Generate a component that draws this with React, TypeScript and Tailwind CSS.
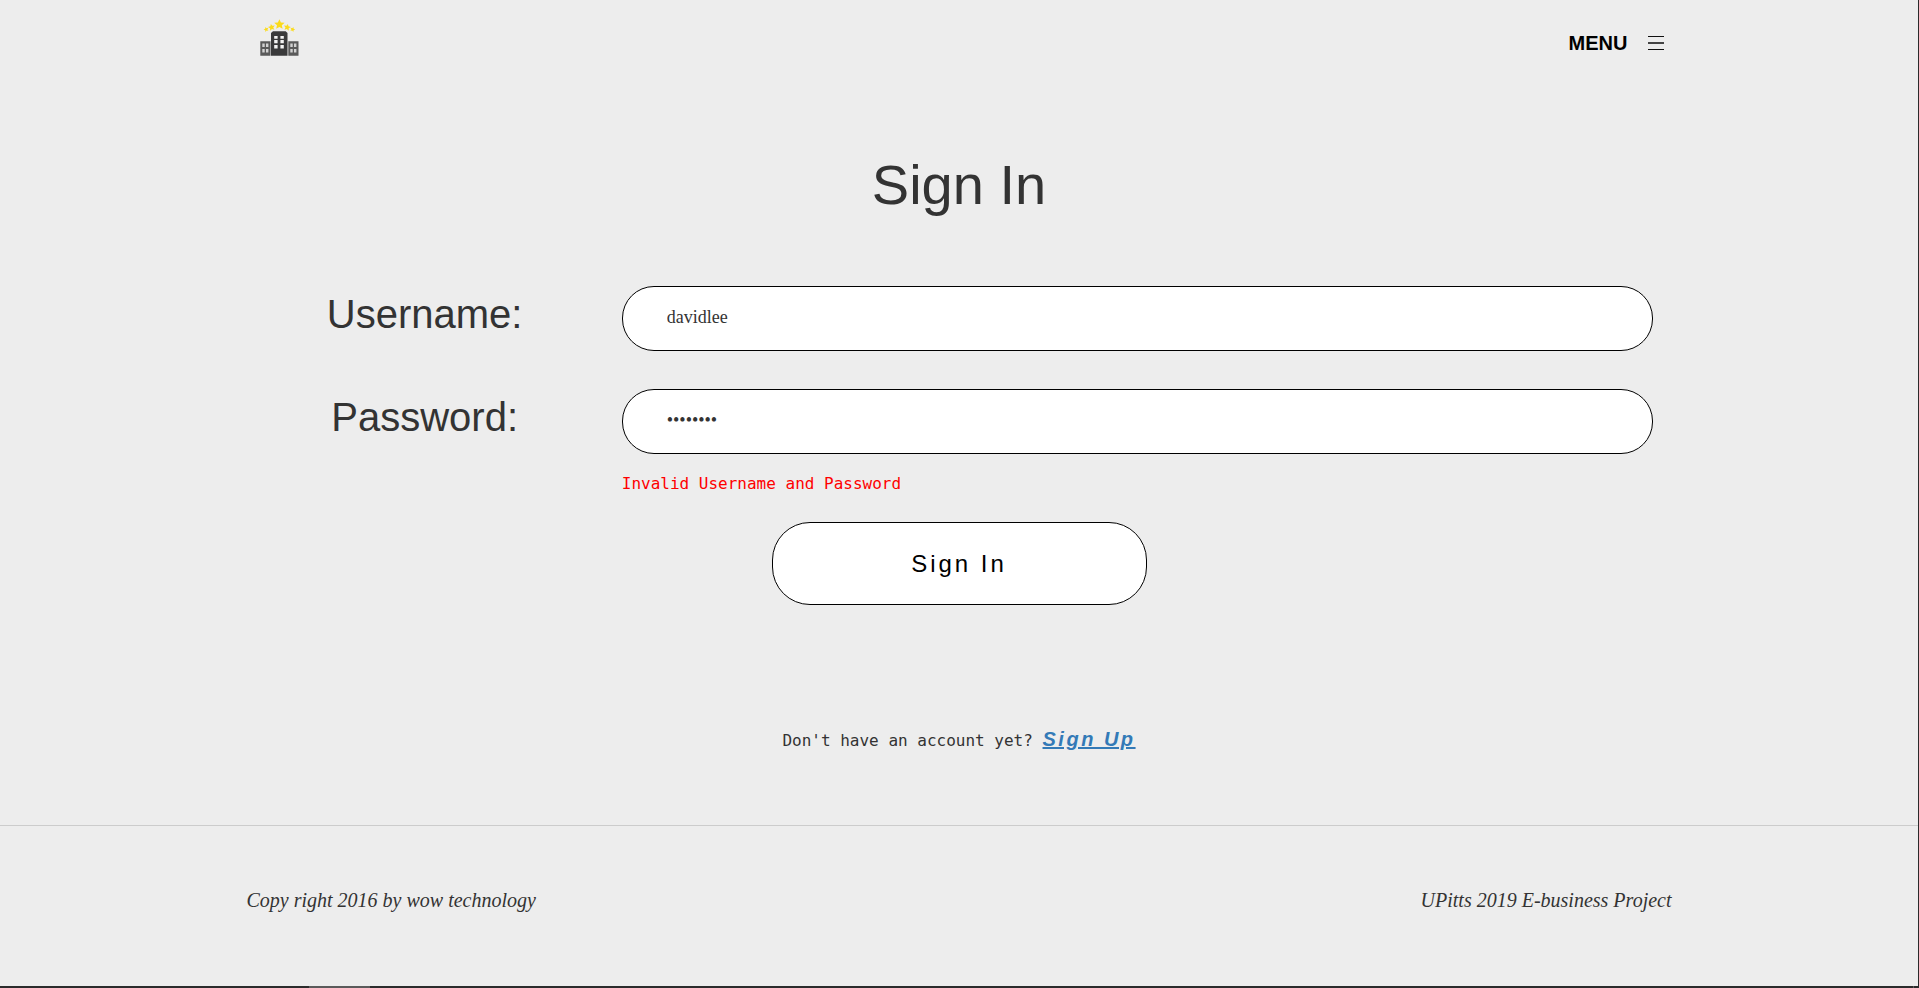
import React from "react";

const STAR =
  "M0 -1 L0.29 -0.36 L1 -0.31 L0.46 0.16 L0.62 0.85 L0 0.48 L-0.62 0.85 L-0.46 0.16 L-1 -0.31 L-0.29 -0.36 Z";

function Logo() {
  return (
    <svg width="40" height="40" viewBox="0 0 40 40" aria-hidden="true">
      <g fill="#fbdb1b">
        <path d={STAR} transform="translate(20.4 6.4) scale(5.2)" />
        <path d={STAR} transform="translate(12.6 9.3) rotate(-12) scale(3.5)" />
        <path d={STAR} transform="translate(28.2 9.3) rotate(12) scale(3.5)" />
        <path d={STAR} transform="translate(7.2 11.4) rotate(-20) scale(2.5)" />
        <path d={STAR} transform="translate(33.6 11.4) rotate(20) scale(2.5)" />
      </g>
      <path fill="#5a5a5a" d="M1.300 23.200h10.200v14.500H1.300zM29.300 23.200h10.200v14.500H29.300z" />
      <path
        fill="#d2d2d2"
        d="M3.300 25.500h2.400v3.600H3.300zM7 25.500h2.400v3.600H7zM3.300 31h2.400v3.600H3.300zM7 31h2.400v3.600H7zM31.300 25.500h2.400v3.600h-2.400zM35 25.500h2.400v3.600H35zM31.300 31h2.400v3.600h-2.400zM35 31h2.400v3.600H35z"
      />
      <path fill="#3a3a3b" d="M14 13.200h12.600L28.500 15v22.700H12V15z" />
      <path
        fill="#f4f4f4"
        d="M15.200 18h3.400v2.800h-3.400zM21.400 18h3.400v2.800h-3.400zM15.200 22h3.400v3.300h-3.400zM21.400 22h3.400v3.300h-3.400zM15.200 27h3.400v3.500h-3.400zM21.400 27h3.400v3.500h-3.400z"
      />
    </svg>
  );
}

function Field({ id, label, type, value }: { id: string; label: string; type: string; value: string }) {
  return (
    <div className="grid grid-cols-4">
      <label htmlFor={id} className="pt-1 text-center text-[40px] leading-12">
        {label}
      </label>
      <div className="col-span-3 px-[19px]">
        <input
          id={id}
          type={type}
          defaultValue={value}
          className="block h-[65px] w-full rounded-[32px] border border-black bg-white px-11 pb-0.5 font-['Liberation_Serif',serif] text-lg outline-none"
        />
      </div>
    </div>
  );
}

export default function App() {
  return (
    <div className="flex min-h-screen flex-col bg-[#2b2b2b] pr-px font-['Liberation_Sans',Arial,sans-serif] text-[#333]">
      <div className="flex grow flex-col bg-[#ededed]">
        <header className="mx-auto flex w-full max-w-[1425px] justify-between pt-[18px] pr-2 pl-3">
          <a href="#home" aria-label="Home">
            <Logo />
          </a>
          <button type="button" className="flex h-[50px] items-center gap-5 text-xl font-bold text-black">
            MENU
            <svg width="16" height="16" viewBox="0 0 16 16" aria-hidden="true">
              <path fill="#111" d="M0 1h16v1H0zM0 14h16v1H0z" />
              <path fill="#444" d="M0 7h16v2H0z" />
            </svg>
          </button>
        </header>

        <main className="mx-auto w-full max-w-[1425px]">
          <h1 className="pt-[85px] text-center text-[56px] leading-16">Sign In</h1>
          <form className="mt-[69px]" onSubmit={(event) => event.preventDefault()}>
            <div className="flex flex-col gap-[38px]">
              <Field id="username" label="Username:" type="text" value="davidlee" />
              <Field id="password" label="Password:" type="password" value="password" />
            </div>
            <div className="grid grid-cols-4">
              <p
                role="alert"
                className="col-span-3 col-start-2 mt-[18px] px-[19px] font-['DejaVu_Sans_Mono',monospace] text-base text-[#f00]"
              >
                Invalid Username and Password
              </p>
            </div>
            <button
              type="submit"
              className="mx-auto mt-[26px] block h-[83px] w-[375px] rounded-[38px] border border-black bg-white text-2xl tracking-[0.125em] text-black"
            >
              Sign In
            </button>
          </form>
          <p className="mt-[120px] text-center font-['DejaVu_Sans_Mono',monospace] text-base leading-7">
            Don't have an account yet?{" "}
            <a
              href="#sign-up"
              className="font-['Liberation_Sans',Arial,sans-serif] text-xl font-bold tracking-[0.125em] text-[#337ab7] italic underline"
            >
              Sign Up
            </a>
          </p>
        </main>

        <footer className="mt-[70px] border-t border-[#ccc]">
          <div className="mx-auto flex w-full max-w-[1425px] justify-between py-[60px] font-['Liberation_Serif',serif] text-xl italic">
            <p>Copy right 2016 by wow technology</p>
            <p>UPitts 2019 E-business Project</p>
          </div>
        </footer>
      </div>
      <div className="flex h-0.5 justify-between">
        <div className="ml-[309px] w-[61px] bg-[#5a5a5a]" />
        <div className="mr-1 w-px bg-[#5a5a5a]" />
      </div>
    </div>
  );
}
